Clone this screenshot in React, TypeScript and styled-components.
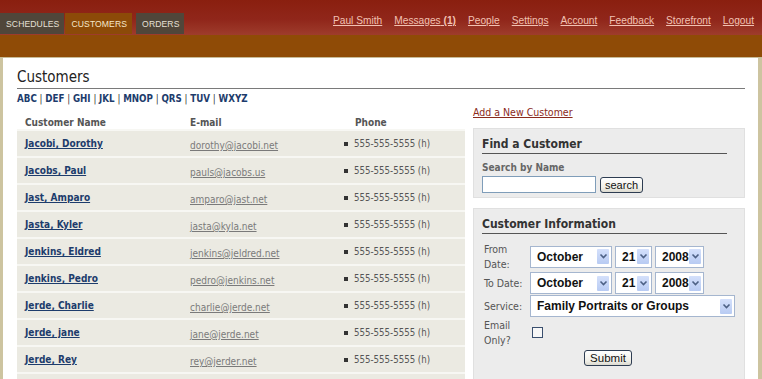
import * as React from 'react';
import styled, { createGlobalStyle } from 'styled-components';

const GlobalStyle = createGlobalStyle`
  html, body {
    margin: 0;
    padding: 0;
    background: #ffffff;
  }
  body {
    font-family: Tahoma, "DejaVu Sans Condensed", "DejaVu Sans", sans-serif;
    font-stretch: condensed;
  }
`;

const customers = [
  { name: 'Jacobi, Dorothy', email: 'dorothy@jacobi.net' },
  { name: 'Jacobs, Paul', email: 'pauls@jacobs.us' },
  { name: 'Jast, Amparo', email: 'amparo@jast.net' },
  { name: 'Jasta, Kyler', email: 'jasta@kyla.net' },
  { name: 'Jenkins, Eldred', email: 'jenkins@jeldred.net' },
  { name: 'Jenkins, Pedro', email: 'pedro@jenkins.net' },
  { name: 'Jerde, Charlie', email: 'charlie@jerde.net' },
  { name: 'Jerde, jane', email: 'jane@jerde.net' },
  { name: 'Jerde, Rey', email: 'rey@jerder.net' },
];

const letters = ['ABC', 'DEF', 'GHI', 'JKL', 'MNOP', 'QRS', 'TUV', 'WXYZ'];
const topLinks = ['Messages', 'People', 'Settings', 'Account', 'Feedback', 'Storefront', 'Logout'];

const Arrow = () => (
  <svg width="9" height="7" viewBox="0 0 9 7">
    <path d="M1.5 1.5 L4.5 4.5 L7.5 1.5" fill="none" stroke="#4d6185" strokeWidth="1.6" />
  </svg>
);

const Select = ({ value, width }: { value: string; width: number }) => (
  <SelectBox style={{ width }}>
    <SelectValue>{value}</SelectValue>
    <SelectArrow>
      <Arrow />
    </SelectArrow>
  </SelectBox>
);

const DateSelects = () => (
  <Selects>
    <Select value="October" width={82} />
    <Select value="21" width={37} />
    <Select value="2008" width={49} />
  </Selects>
);

export default function App() {
  return (
    <>
      <GlobalStyle />
      <Page>
        <TopBar>
          <Tabs>
            <Tab>SCHEDULES</Tab>
            <Tab $active>CUSTOMERS</Tab>
            <Tab $gap>ORDERS</Tab>
          </Tabs>
          <TopLinks>
            <TopLink href="#">Paul Smith</TopLink>
            {topLinks.map((l) => (
              <TopLink key={l} href="#">
                {l}
                {l === 'Messages' && <b> (1)</b>}
              </TopLink>
            ))}
          </TopLinks>
        </TopBar>
        <SubBar />
        <Main>
          <Title>Customers</Title>
          <Letters>
            {letters.map((l, i) => (
              <React.Fragment key={l}>
                {i > 0 && <Sep> | </Sep>}
                <LetterLink href="#">{l}</LetterLink>
              </React.Fragment>
            ))}
          </Letters>
          <Columns>
            <Table>
              <HeadRow>
                <HeadCell>Customer Name</HeadCell>
                <HeadCell>E-mail</HeadCell>
                <HeadCell $indent>Phone</HeadCell>
              </HeadRow>
              {customers.map((c) => (
                <Row key={c.name}>
                  <NameLink href="#">{c.name}</NameLink>
                  <EmailCell>
                    <EmailLink href="#">{c.email}</EmailLink>
                  </EmailCell>
                  <PhoneCell>
                    <Bullet />
                    555-555-5555 (h)
                  </PhoneCell>
                </Row>
              ))}
              <Row />
            </Table>
            <Side>
              <AddLink href="#">Add a New Customer</AddLink>
              <Panel>
                <PanelTitle>Find a Customer</PanelTitle>
                <FieldLabel>Search by Name</FieldLabel>
                <SearchRow>
                  <TextInput />
                  <Button>search</Button>
                </SearchRow>
              </Panel>
              <Panel $tall>
                <PanelTitle $roomy>Customer Information</PanelTitle>
                <Form>
                  <FormRow>
                    <RowLabel>
                      From
                      <br />
                      Date:
                    </RowLabel>
                    <DateSelects />
                  </FormRow>
                  <FormRow>
                    <RowLabel>To Date:</RowLabel>
                    <DateSelects />
                  </FormRow>
                  <FormRow>
                    <RowLabel>Service:</RowLabel>
                    <Selects>
                      <Select value="Family Portraits or Groups" width={205} />
                    </Selects>
                  </FormRow>
                  <FormRow>
                    <RowLabel>
                      Email
                      <br />
                      Only?
                    </RowLabel>
                    <CheckBox />
                  </FormRow>
                  <SubmitRow>
                    <Button $big>Submit</Button>
                  </SubmitRow>
                </Form>
              </Panel>
            </Side>
          </Columns>
        </Main>
      </Page>
    </>
  );
}

const Page = styled.div`
  width: 762px;
  height: 379px;
  overflow: hidden;
  display: flex;
  flex-direction: column;
`;

const TopBar = styled.div`
  height: 35px;
  flex-shrink: 0;
  display: flex;
  justify-content: space-between;
  align-items: flex-end;
  background: linear-gradient(180deg, #8a1f0f 0%, #90261a 55%, #9e3c2c 100%);
`;

const Tabs = styled.div`
  display: flex;
  gap: 1px;
  padding-bottom: 1px;
`;

const Tab = styled.div<{ $active?: boolean; $gap?: boolean }>`
  height: 21px;
  padding: 0 5px 0 6px;
  margin-left: ${(p) => (p.$gap ? '3px' : '0')};
  display: flex;
  align-items: center;
  font-family: "Liberation Sans", Arial, sans-serif;
  font-stretch: normal;
  font-size: 8.6px;
  letter-spacing: 0.1px;
  color: ${(p) => (p.$active ? '#f6e7c8' : '#e6e0d6')};
  background: ${(p) => (p.$active ? '#8c4a08' : '#50463a')};
`;

const TopLinks = styled.div`
  display: flex;
  gap: 12px;
  padding: 0 8px 9px 0;
`;

const TopLink = styled.a`
  font-family: "Liberation Sans", Arial, sans-serif;
  font-stretch: normal;
  font-size: 10.2px;
  color: #f2c2b2;
  text-decoration: underline;
  b {
    font-weight: bold;
  }
`;

const SubBar = styled.div`
  height: 22px;
  flex-shrink: 0;
  background: #8f4b06;
  border-bottom: 1px solid #c8bc98;
`;

const Main = styled.div`
  flex: 1;
  border-left: 3px solid #cdc4a0;
  border-right: 4px solid #cdc4a0;
  padding: 10px 13px 0 14px;
  display: flex;
  flex-direction: column;
`;

const Title = styled.h1`
  margin: 0;
  font-size: 15px;
  font-weight: normal;
  color: #222;
  padding-bottom: 2px;
  border-bottom: 1px solid #7a7a7a;
  line-height: 18px;
`;

const Letters = styled.div`
  margin-top: 3px;
  font-size: 9.7px;
  font-weight: bold;
  line-height: 14px;
`;

const LetterLink = styled.a`
  color: #1d3c6c;
  text-decoration: none;
`;

const Sep = styled.span`
  color: #333;
  font-weight: normal;
`;

const Columns = styled.div`
  display: grid;
  grid-template-columns: 448px 272px;
  gap: 8px;
`;

const Table = styled.div`
  display: flex;
  flex-direction: column;
  padding-top: 9px;
`;

const rowGrid = `
  display: grid;
  grid-template-columns: 165px 154px 129px;
  align-items: center;
`;

const HeadRow = styled.div`
  ${rowGrid}
  height: 14px;
`;

const HeadCell = styled.div<{ $indent?: boolean }>`
  padding-left: ${(p) => (p.$indent ? '19px' : '8px')};
  font-size: 10px;
  font-weight: bold;
  color: #555;
`;

const Row = styled.div`
  ${rowGrid}
  height: 25px;
  flex-shrink: 0;
  background: #ebeae2;
  border-top: 2px solid #f7f7f3;
`;

const NameLink = styled.a`
  padding-left: 8px;
  font-size: 10px;
  font-weight: bold;
  color: #1d3c6c;
  text-decoration: underline;
`;

const EmailCell = styled.div`
  padding-left: 8px;
`;

const EmailLink = styled.a`
  font-size: 10px;
  color: #7a7a7a;
  text-decoration: underline;
`;

const PhoneCell = styled.div`
  padding-left: 8px;
  display: flex;
  align-items: center;
  gap: 6px;
  font-size: 9.6px;
  color: #555;
`;

const Bullet = styled.span`
  width: 4px;
  height: 4px;
  background: #333;
`;

const Side = styled.div`
  display: flex;
  flex-direction: column;
`;

const AddLink = styled.a`
  font-size: 10.5px;
  color: #8b2a1c;
  text-decoration: underline;
  line-height: 13px;
  margin: 0 0 9px 0;
`;

const Panel = styled.div<{ $tall?: boolean }>`
  background: #ececec;
  border: 1px solid #e0e0e0;
  padding: 8px 10px ${(p) => (p.$tall ? '20px' : '4px')} 8px;
  margin-bottom: 10px;
`;

const PanelTitle = styled.h2<{ $roomy?: boolean }>`
  margin: 0 7px ${(p) => (p.$roomy ? '8px' : '7px')} 0;
  font-size: 12px;
  font-weight: bold;
  color: #333;
  line-height: 14px;
  padding-bottom: 2px;
  border-bottom: 1px solid #555;
`;

const FieldLabel = styled.div`
  font-size: 10px;
  font-weight: bold;
  color: #666;
  line-height: 13px;
`;

const SearchRow = styled.div`
  display: flex;
  align-items: center;
  gap: 4px;
  margin-top: 2px;
`;

const TextInput = styled.div`
  width: 112px;
  height: 15px;
  background: #fff;
  border: 1px solid #7f9db9;
`;

const Button = styled.button<{ $big?: boolean }>`
  height: 16px;
  padding: 0 ${(p) => (p.$big ? '5px' : '4px')};
  font-family: "Liberation Sans", Arial, sans-serif;
  font-stretch: normal;
  font-size: ${(p) => (p.$big ? '11.5px' : '11px')};
  line-height: 12px;
  color: #111;
  background: linear-gradient(180deg, #ffffff 0%, #f0efe8 70%, #dcdad0 100%);
  border: 1px solid #2e3d52;
  border-radius: 3px;
`;

const Form = styled.div`
  display: flex;
  flex-direction: column;
  gap: 1px;
`;

const FormRow = styled.div`
  display: flex;
  align-items: center;
`;

const RowLabel = styled.div`
  width: 46px;
  flex-shrink: 0;
  padding-left: 2px;
  font-size: 10.5px;
  line-height: 14.5px;
  color: #555;
`;

const Selects = styled.div`
  display: flex;
  gap: 3px;
`;

const SelectBox = styled.div`
  height: 22px;
  display: flex;
  align-items: center;
  justify-content: space-between;
  background: #fff;
  border: 1px solid #a5b6cf;
  box-sizing: border-box;
  padding: 0 2px 0 6px;
`;

const SelectValue = styled.span`
  font-family: "Liberation Sans", Arial, sans-serif;
  font-stretch: normal;
  font-size: 12px;
  font-weight: bold;
  color: #111;
`;

const SelectArrow = styled.span`
  width: 12px;
  height: 15px;
  display: flex;
  align-items: center;
  justify-content: center;
  background: linear-gradient(180deg, #d4e0fb 0%, #b8cbf3 100%);
  border-radius: 1px;
`;

const CheckBox = styled.span`
  width: 9px;
  height: 9px;
  margin-left: 2px;
  border: 1px solid #3a4f6e;
  background: #f7f7f7;
`;

const SubmitRow = styled.div`
  display: flex;
  justify-content: center;
  margin-top: 2px;
`;
